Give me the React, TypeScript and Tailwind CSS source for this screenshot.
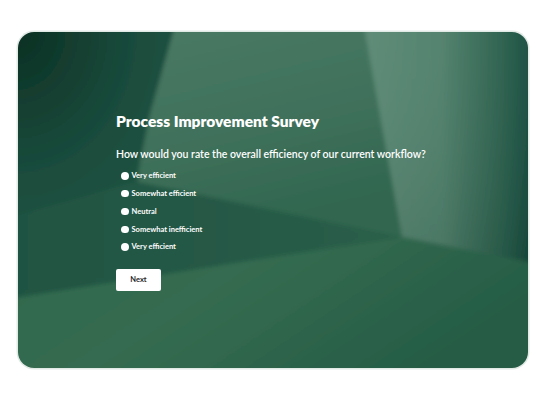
import React from "react";

const options = [
  "Very efficient",
  "Somewhat efficient",
  "Neutral",
  "Somewhat inefficient",
  "Very efficient",
];

function Backdrop() {
  return (
    <svg
      className="absolute inset-0"
      width="510"
      height="336"
      viewBox="0 0 510 336"
      preserveAspectRatio="none"
    >
      <defs>
        <linearGradient id="base" x1="0" y1="0" x2="1" y2="1">
          <stop offset="0" stopColor="#1d5142" />
          <stop offset="1" stopColor="#2a5f48" />
        </linearGradient>
        <radialGradient id="leftDark" cx="0" cy="0" r="1" gradientUnits="userSpaceOnUse" gradientTransform="translate(0 0) scale(220 260)">
          <stop offset="0" stopColor="#0c3024" />
          <stop offset="0.55" stopColor="#1a4d3d" />
          <stop offset="1" stopColor="#215645" />
        </radialGradient>
        <linearGradient id="mid" x1="0" y1="0" x2="0.3" y2="1">
          <stop offset="0" stopColor="#4a7a64" />
          <stop offset="0.6" stopColor="#3f705a" />
          <stop offset="1" stopColor="#30664f" />
        </linearGradient>
        <linearGradient id="topRight" x1="0" y1="0" x2="1" y2="0">
          <stop offset="0" stopColor="#5a8974" />
          <stop offset="0.45" stopColor="#4f806b" />
          <stop offset="0.8" stopColor="#2a5f4c" />
          <stop offset="1" stopColor="#11463a" />
        </linearGradient>
        <linearGradient id="topRightV" x1="0" y1="0" x2="0" y2="1">
          <stop offset="0" stopColor="#ffffff" stopOpacity="0.03" />
          <stop offset="1" stopColor="#000000" stopOpacity="0.08" />
        </linearGradient>
        <linearGradient id="bottom" x1="0" y1="0" x2="1" y2="0.4">
          <stop offset="0" stopColor="#2f684d" />
          <stop offset="0.45" stopColor="#356c51" />
          <stop offset="1" stopColor="#265c45" />
        </linearGradient>
        <linearGradient id="band" x1="0" y1="0" x2="1" y2="0">
          <stop offset="0" stopColor="#1f5342" />
          <stop offset="1" stopColor="#2b5f49" />
        </linearGradient>
        <filter id="soft" x="-5%" y="-5%" width="110%" height="110%">
          <feGaussianBlur stdDeviation="2" />
        </filter>
      </defs>
      <g filter="url(#soft)">
        <rect x="-10" y="-10" width="530" height="356" fill="url(#base)" />
        <polygon points="-10,180 120,150 384,205 -10,275" fill="url(#band)" />
        <polygon points="140,-10 345,-10 384,205 120,150 128,60" fill="url(#mid)" />
        <polygon points="345,-10 520,-10 520,232 384,205" fill="url(#topRight)" />
        <polygon points="345,-10 520,-10 520,232 384,205" fill="url(#topRightV)" />
        <polygon points="-10,-10 158,-10 132,82 118,150 -10,185" fill="url(#leftDark)" />
        <polygon points="-10,267 384,205 520,232 520,346 -10,346" fill="url(#bottom)" />
      </g>
    </svg>
  );
}

export default function App() {
  return (
    <div className="w-[547px] h-[400px] bg-white pt-[32px] pl-[18px]">
      <div className="relative w-[510px] h-[336px] rounded-[16px] overflow-hidden shadow-[0_0_0_1.5px_#e2eae6]">
        <Backdrop />
        <div
          className="relative flex flex-col items-start pl-[98px] pt-[79px] text-white"
          style={{ fontFamily: "Lato, 'Noto Sans', sans-serif" }}
        >
          <h1 className="text-[15.5px] leading-[20px] font-extrabold">Process Improvement Survey</h1>
          <p className="mt-[16px] text-[10.5px] leading-[14px] font-semibold">
            How would you rate the overall efficiency of our current workflow?
          </p>
          <div className="mt-[6px] flex flex-col">
            {options.map((o, i) => (
              <label key={i} className="flex items-center h-[17.8px] pl-[5px] gap-[3px]">
                <span className="w-[7.5px] h-[7.5px] rounded-full bg-white" />
                <span className="text-[7.5px] font-bold leading-none">{o}</span>
              </label>
            ))}
          </div>
          <button className="mt-[13px] w-[45px] h-[22px] bg-white rounded-[2px] text-[7.5px] font-bold text-[#1f1f1f] flex items-center justify-center">
            Next
          </button>
        </div>
      </div>
    </div>
  );
}
